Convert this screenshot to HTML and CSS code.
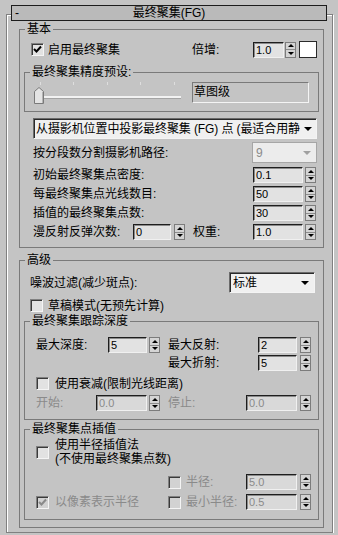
FILE: index.html
```html
<!DOCTYPE html>
<html lang="zh-CN">
<head>
    <meta charset="UTF-8">
    <meta name="viewport" content="width=device-width, initial-scale=1.0">
    <title>最终聚集(FG)</title>
    <link rel="stylesheet" href="styles.css">
</head>
<body>
    <div class="rollout">
        <div class="rollout-title">
            <span class="minus">-</span>
            <span class="rollout-name">最终聚集(FG)</span>
            <span></span>
        </div>

        <!-- 基本 -->
        <div class="group group-basic">
            <div class="group-title">基本</div>
            <div class="row row-enable">
                <span class="chk"><svg width="11" height="11"><polyline points="2,5 4.5,7.5 9,2.5" fill="none" stroke="#000" stroke-width="2"/></svg></span>
                <span class="lbl w-enable">启用最终聚集</span>
                <span class="lbl w-mult">倍增:</span>
                <span class="num w31">1.0</span>
                <span class="spin ml1"><i class="up"></i><i class="dn"></i></span>
                <span class="swatch"></span>
            </div>

            <div class="group sub sub-preset">
                <div class="group-title">最终聚集精度预设:</div>
                <div class="row row-slider">
                    <svg class="slider" width="147" height="23">
                        <rect x="6" y="0" width="1" height="3" fill="#dedede"/>
                        <rect x="39" y="0" width="1" height="3" fill="#dedede"/>
                        <rect x="73" y="0" width="1" height="3" fill="#dedede"/>
                        <rect x="106" y="0" width="1" height="3" fill="#dedede"/>
                        <rect x="140" y="0" width="1" height="3" fill="#dedede"/>
                        <rect x="10" y="14" width="137" height="2" fill="#f2f2f2"/>
                        <rect x="10" y="16" width="137" height="1" fill="#a4a4a4"/>
                        <polygon points="0.5,9.5 5,5.5 9.5,9.5 9.5,21.5 0.5,21.5" fill="#e4e4e4" stroke="#7a7a7a"/>
                        <rect x="8" y="10" width="1" height="11" fill="#b4b4b4"/>
                    </svg>
                    <span class="preset-box">草图级</span>
                </div>
            </div>

            <div class="combo combo-mode">
                <span class="combo-text">从摄影机位置中投影最终聚集 (FG) 点 (最适合用静</span>
                <span class="arrow"></span>
            </div>

            <div class="row row-a">
                <span class="lbl grow">按分段数分割摄影机路径:</span>
                <div class="combo disabled w65"><span class="combo-text">9</span><span class="arrow"></span></div>
            </div>
            <div class="row row-field first">
                <span class="lbl grow">初始最终聚集点密度:</span>
                <span class="num w50">0.1</span>
                <span class="spin ml2"><i class="up"></i><i class="dn"></i></span>
            </div>
            <div class="row row-field">
                <span class="lbl grow">每最终聚集点光线数目:</span>
                <span class="num w50">50</span>
                <span class="spin ml2"><i class="up"></i><i class="dn"></i></span>
            </div>
            <div class="row row-field">
                <span class="lbl grow">插值的最终聚集点数:</span>
                <span class="num w50">30</span>
                <span class="spin ml2"><i class="up"></i><i class="dn"></i></span>
            </div>
            <div class="row row-field">
                <span class="lbl w100">漫反射反弹次数:</span>
                <span class="num w38">0</span>
                <span class="spin ml3"><i class="up"></i><i class="dn"></i></span>
                <span class="lbl grow ml8">权重:</span>
                <span class="num w50">1.0</span>
                <span class="spin ml2"><i class="up"></i><i class="dn"></i></span>
            </div>
        </div>

        <!-- 高级 -->
        <div class="group group-adv">
            <div class="group-title">高级</div>
            <div class="row row-noise">
                <span class="lbl grow">噪波过滤(减少斑点):</span>
                <div class="combo w86"><span class="combo-text">标准</span><span class="arrow"></span></div>
            </div>
            <div class="row row-draft">
                <span class="chk"></span>
                <span class="lbl ml5">草稿模式(无预先计算)</span>
            </div>

            <div class="group sub sub-trace">
                <div class="group-title">最终聚集跟踪深度</div>
                <div class="row row-depth">
                    <span class="lbl w72">最大深度:</span>
                    <span class="num w39">5</span>
                    <span class="spin ml2"><i class="up"></i><i class="dn"></i></span>
                    <span class="lbl w90 ml8">最大反射:</span>
                    <span class="num w39">2</span>
                    <span class="spin ml3"><i class="up"></i><i class="dn"></i></span>
                </div>
                <div class="row row-refr">
                    <span class="lbl w90">最大折射:</span>
                    <span class="num w39">5</span>
                    <span class="spin ml3"><i class="up"></i><i class="dn"></i></span>
                </div>
                <div class="row row-falloff">
                    <span class="chk"></span>
                    <span class="lbl ml6">使用衰减(限制光线距离)</span>
                </div>
                <div class="row row-start">
                    <span class="lbl w60 off">开始:</span>
                    <span class="num w51 off">0.0</span>
                    <span class="spin ml2"><i class="up"></i><i class="dn"></i></span>
                    <span class="lbl w78 ml8 off">停止:</span>
                    <span class="num w51 off">0.0</span>
                    <span class="spin ml3"><i class="up"></i><i class="dn"></i></span>
                </div>
            </div>

            <div class="group sub sub-interp">
                <div class="group-title">最终聚集点插值</div>
                <div class="row row-use-radius">
                    <span class="chk"></span>
                    <span class="lbl ml6 two-line">使用半径插值法<br>(不使用最终聚集点数)</span>
                </div>
                <div class="row row-radius">
                    <span class="chk off"></span>
                    <span class="lbl w60 ml5 off">半径:</span>
                    <span class="num w51 off">5.0</span>
                    <span class="spin ml3"><i class="up"></i><i class="dn"></i></span>
                </div>
                <div class="row row-min-radius">
                    <span class="chk off"><svg width="11" height="11"><polyline points="2,5 4.5,7.5 9,2.5" fill="none" stroke="#8a8a8a" stroke-width="2"/></svg></span>
                    <span class="lbl w113 ml6 off">以像素表示半径</span>
                    <span class="chk off"></span>
                    <span class="lbl w60 ml5 off">最小半径:</span>
                    <span class="num w51 off">0.5</span>
                    <span class="spin ml3"><i class="up"></i><i class="dn"></i></span>
                </div>
            </div>
        </div>
    </div>
</body>
</html>
```

FILE: styles.css
```css
body {
    margin: 0;
    background-color: #c4c4c4;
    font-family: "Liberation Sans", "Noto Sans CJK SC", sans-serif;
    font-size: 12px;
    line-height: 14px;
    color: #000;
}

/* rollout frame */
.rollout {
    margin: 14px 5px 0 6px;
    padding-bottom: 4px;
    border: 1px solid #808080;
    box-shadow: inset 1px 1px 0 #fff, 1px 1px 0 #fff;
}
.rollout-title {
    display: grid;
    grid-template-columns: 1fr auto 1fr;
    align-items: center;
    height: 16px;
    box-sizing: border-box;
    margin: -10px 5px 0 4px;
    border: 1px solid #1c1c1c;
    background-color: #bababa;
    line-height: 14px;
}
.minus {
    padding-left: 3px;
}

/* group boxes */
.group {
    border: 1px solid #7a7a7a;
    margin: 0 8px 0 12px;
}
.group-title {
    width: fit-content;
    height: 13px;
    line-height: 13px;
    margin: -7px 0 0 5px;
    padding: 0 2px;
    background-color: #c4c4c4;
}
.group.group-basic {
    margin-top: 8px;
    padding-bottom: 7px;
}
.group.group-adv {
    margin-top: 12px;
    padding-bottom: 7px;
}
.group.sub {
    margin-left: 4px;
    margin-right: 4px;
}
.group.sub-preset {
    margin-top: 14px;
    padding-bottom: 6px;
}
.group.sub-trace {
    margin-top: 9px;
    padding-bottom: 8px;
}
.group.sub-interp {
    margin-top: 9px;
    padding-bottom: 9px;
}

/* rows */
.row {
    display: flex;
    align-items: center;
    height: 16px;
}
.row-enable {
    margin-top: 5px;
    height: 17px;
    padding-left: 11px;
}
.row-slider {
    margin-top: 3px;
    height: 23px;
    align-items: flex-start;
    padding-left: 9px;
}
.row-a {
    margin-top: 3px;
    height: 21px;
    padding: 0 6px 0 13px;
}
.row-field {
    margin-top: 3px;
    padding: 0 7px 0 13px;
}
.row-field.first {
    margin-top: 4px;
}
.row-noise {
    margin-top: 5px;
    height: 21px;
    padding: 0 8px 0 10px;
}
.row-draft {
    margin-top: 6px;
    height: 13px;
    padding-left: 10px;
}
.row-depth {
    margin-top: 9px;
    padding-left: 11px;
}
.row-refr {
    margin-top: 2px;
    padding-left: 143px;
}
.row-falloff {
    margin-top: 6px;
    height: 13px;
    padding-left: 11px;
}
.row-start {
    margin-top: 5px;
    padding-left: 11px;
}
.row-use-radius {
    margin-top: 2px;
    height: 28px;
    padding-left: 11px;
}
.row-radius {
    margin-top: 8px;
    padding-left: 143px;
}
.row-min-radius {
    margin-top: 4px;
    padding-left: 11px;
}

.lbl {
    white-space: nowrap;
}
.grow { flex: 1; }
.w-enable { width: 144px; margin-left: 4px; }
.w-mult { width: 61px; }
.w31 { width: 31px; }
.w38 { width: 38px; }
.w39 { width: 39px; }
.w50 { width: 50px; }
.w51 { width: 51px; }
.w60 { width: 60px; }
.w65 { width: 65px; }
.w72 { width: 72px; }
.w78 { width: 78px; }
.w86 { width: 86px; }
.w90 { width: 90px; }
.w100 { width: 100px; }
.w113 { width: 113px; }
.ml1 { margin-left: 1px; }
.ml2 { margin-left: 2px; }
.ml3 { margin-left: 3px; }
.ml5 { margin-left: 5px; }
.ml6 { margin-left: 6px; }
.ml8 { margin-left: 8px; }
.off { color: #8a8a8a; }
.two-line {
    line-height: 14px;
}

/* controls */
.chk {
    flex: none;
    display: flex;
    width: 13px;
    height: 13px;
    box-sizing: border-box;
    border: 1px solid;
    border-color: #808080 #f4f4f4 #f4f4f4 #808080;
    box-shadow: inset 1px 1px 0 #3a3a3a;
    background-color: #e2e2e2;
}
.chk.off {
    background-color: #d2d2d2;
}

.num {
    flex: none;
    height: 16px;
    box-sizing: border-box;
    padding-left: 2px;
    border: 1px solid;
    border-color: #1e1e1e #f0f0f0 #f0f0f0 #1e1e1e;
    box-shadow: inset 1px 1px 0 #8a8a8a;
    background-color: #e2e2e2;
    font-size: 11px;
    line-height: 14px;
}
.num.off {
    background-color: #d9d9d9;
}

.spin {
    flex: none;
    display: flex;
    flex-direction: column;
    width: 11px;
    height: 16px;
    box-sizing: border-box;
    border: 1px solid #7c7c7c;
    background-color: #d4d4d4;
}
.spin i {
    flex: 1;
    display: flex;
    align-items: center;
    justify-content: center;
}
.spin i::before {
    content: '';
    border-left: 3px solid transparent;
    border-right: 3px solid transparent;
}
.spin .up::before {
    border-bottom: 3px solid #000;
}
.spin .dn {
    border-top: 1px solid #8c8c8c;
}
.spin .dn::before {
    border-top: 3px solid #000;
}

.swatch {
    flex: none;
    width: 18px;
    height: 17px;
    box-sizing: border-box;
    margin-left: 3px;
    border: 1px solid #2a2a2a;
    background-color: #fff;
}

.slider {
    flex: none;
    display: block;
}
.preset-box {
    width: 117px;
    height: 21px;
    box-sizing: border-box;
    margin-left: 11px;
    padding: 2px 0 0 1px;
    border: 1px solid;
    border-color: #7a7a7a #f4f4f4 #f4f4f4 #7a7a7a;
}

.combo {
    flex: none;
    display: flex;
    align-items: center;
    justify-content: space-between;
    height: 21px;
    box-sizing: border-box;
    padding: 0 5px 0 3px;
    border: 1px solid;
    border-color: #6a6a6a #f4f4f4 #f4f4f4 #6a6a6a;
    box-shadow: inset 1px 1px 0 #2a2a2a;
    background-color: #f0f0f0;
    overflow: hidden;
}
.combo-text {
    white-space: nowrap;
    overflow: hidden;
}
.combo-mode {
    margin: 6px 6px 0 13px;
    padding: 0 4px 0 2px;
    letter-spacing: -0.1px;
}
.arrow {
    flex: none;
    margin-left: 2px;
    border-left: 4px solid transparent;
    border-right: 4px solid transparent;
    border-top: 4px solid #000;
}
.combo.disabled {
    border-color: #a6a6a6;
    box-shadow: none;
    background-color: #ececec;
    color: #8a8a8a;
}
.combo.disabled .arrow {
    border-top-color: #a0a0a0;
}
```
